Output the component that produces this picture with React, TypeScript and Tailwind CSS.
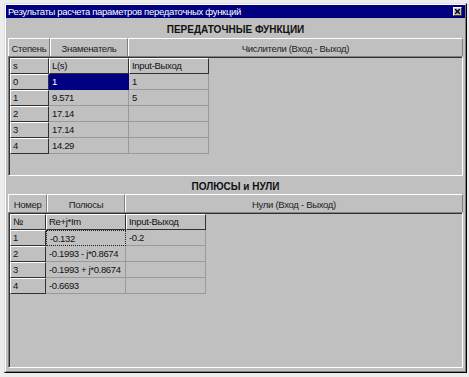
import React from "react";

const font = { fontFamily: '"Liberation Sans", Arial, sans-serif' };

function FixedCell({ w, children }: { w: string; children?: React.ReactNode }) {
  return (
    <div
      className={`${w} h-[16px] shrink-0 border border-white border-r-[#303030] border-b-[#303030] pl-[2px] text-[9.5px] tracking-[-0.3px] leading-[14px] text-[#111] overflow-hidden whitespace-nowrap`}
    >
      {children}
    </div>
  );
}

function DataCell({
  w,
  children,
  selected,
  focus,
}: {
  w: string;
  children?: React.ReactNode;
  selected?: boolean;
  focus?: boolean;
}) {
  const base = `${w} h-[16px] shrink-0 pl-[3px] text-[9.5px] tracking-[-0.35px] leading-[15px] overflow-hidden whitespace-nowrap`;
  if (selected)
    return <div className={`${base} bg-[#000080] text-white border-r border-b border-[#000080]`}>{children}</div>;
  if (focus)
    return (
      <div className={`${base} text-[#111] border border-dotted border-[#202020] pl-[2px] leading-[13px]`}>{children}</div>
    );
  return <div className={`${base} text-[#111] border-r border-b border-[#9a9a9a]`}>{children}</div>;
}

function HeaderStrip({ items }: { items: { w: string; label: string }[] }) {
  return (
    <div className="h-[18px] flex mx-[2px]">
      {items.map((it, i) => (
        <div
          key={i}
          className={`${it.w} h-full flex items-center justify-center border-t border-l border-white border-r border-r-[#808080] text-[9.5px] tracking-[-0.3px] text-[#222] pt-[3px] whitespace-nowrap`}
        >
          {it.label}
        </div>
      ))}
    </div>
  );
}

function GridFrame({ h, children }: { h: string; children: React.ReactNode }) {
  return (
    <div className={`${h} mx-[2px] border border-[#808080] border-r-white border-b-white`}>
      <div className="h-full border-t border-l border-[#303030]">{children}</div>
    </div>
  );
}

export default function App() {
  const tf = [
    ["0", "1", "1"],
    ["1", "9.571", "5"],
    ["2", "17.14", ""],
    ["3", "17.14", ""],
    ["4", "14.29", ""],
  ];
  const pz = [
    ["1", "-0.132", "-0.2"],
    ["2", "-0.1993 - j*0.8674", ""],
    ["3", "-0.1993 + j*0.8674", ""],
    ["4", "-0.6693", ""],
  ];
  return (
    <div className="w-[469px] h-[377px] bg-[#ededed] pl-[4px] pt-[3px]" style={font}>
      <div className="w-[463px] h-[370px] border border-[#dfdfdf] border-r-black border-b-black">
        <div className="h-full border border-white border-r-[#808080] border-b-[#808080] bg-[#c0c0c0] flex flex-col">
          {/* Title bar */}
          <div className="h-[13px] bg-[#000080] flex items-center justify-between pl-[2px] pr-[3px] shrink-0">
            <span className="text-white text-[9.5px] leading-none tracking-[-0.3px] whitespace-nowrap">
              Результаты расчета параметров передаточных функций
            </span>
            <div className="w-[9px] h-[9px] bg-[#c0c0c0] border-t border-l border-white border-r border-b border-r-[#404040] border-b-[#404040] flex items-center justify-center">
              <svg width="5" height="5" viewBox="0 0 5 5">
                <path d="M0 0 L5 5 M5 0 L0 5" stroke="#000" strokeWidth="1.4" />
              </svg>
            </div>
          </div>

          {/* Section 1 */}
          <div className="h-[20px] flex items-center justify-center pt-[3px] shrink-0">
            <span className="text-[10px] font-bold text-[#111]">ПЕРЕДАТОЧНЫЕ ФУНКЦИИ</span>
          </div>
          <HeaderStrip
            items={[
              { w: "w-[42px]", label: "Степень" },
              { w: "w-[78px]", label: "Знаменатель" },
              { w: "flex-1", label: "Числители (Вход - Выход)" },
            ]}
          />
          <GridFrame h="h-[120px]">
            <div className="flex">
              <FixedCell w="w-[39px]">s</FixedCell>
              <FixedCell w="w-[80px]">L(s)</FixedCell>
              <FixedCell w="w-[80px]">Input-Выход</FixedCell>
            </div>
            {tf.map((r, i) => (
              <div className="flex" key={i}>
                <FixedCell w="w-[39px]">{r[0]}</FixedCell>
                <DataCell w="w-[80px]" selected={i === 0}>
                  {r[1]}
                </DataCell>
                <DataCell w="w-[80px]">{r[2]}</DataCell>
              </div>
            ))}
          </GridFrame>

          {/* Section 2 */}
          <div className="h-[18px] flex items-center justify-center pt-[2px] shrink-0">
            <span className="text-[10px] font-bold text-[#111]">ПОЛЮСЫ и НУЛИ</span>
          </div>
          <HeaderStrip
            items={[
              { w: "w-[39px]", label: "Номер" },
              { w: "w-[78px]", label: "Полюсы" },
              { w: "flex-1", label: "Нули (Вход - Выход)" },
            ]}
          />
          <GridFrame h="h-[156px]">
            <div className="flex">
              <FixedCell w="w-[36px]">№</FixedCell>
              <FixedCell w="w-[80px]">Re+j*Im</FixedCell>
              <FixedCell w="w-[80px]">Input-Выход</FixedCell>
            </div>
            {pz.map((r, i) => (
              <div className="flex" key={i}>
                <FixedCell w="w-[36px]">{r[0]}</FixedCell>
                <DataCell w="w-[80px]" focus={i === 0}>
                  {r[1]}
                </DataCell>
                <DataCell w="w-[80px]">{r[2]}</DataCell>
              </div>
            ))}
          </GridFrame>
        </div>
      </div>
    </div>
  );
}
